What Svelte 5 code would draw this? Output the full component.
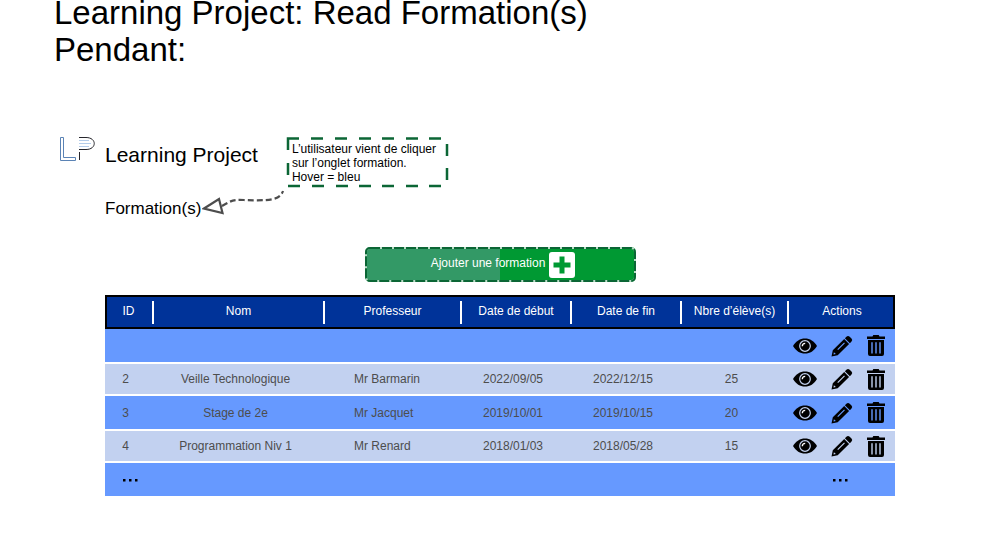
<script>
  const columns = [
    { label: 'ID', width: 49 },
    { label: 'Nom', width: 171 },
    { label: 'Professeur', width: 137 },
    { label: 'Date de début', width: 110 },
    { label: 'Date de fin', width: 110 },
    { label: 'Nbre d’élève(s)', width: 107 },
    { label: 'Actions', width: 106 },
  ];
  const total = columns.reduce((sum, c) => sum + c.width, 0);

  const rows = [
    ['', '', '', '', '', ''],
    ['2', 'Veille Technologique', 'Mr Barmarin', '2022/09/05', '2022/12/15', '25'],
    ['3', 'Stage de 2e', 'Mr Jacquet', '2019/10/01', '2019/10/15', '20'],
    ['4', 'Programmation Niv 1', 'Mr Renard', '2018/01/03', '2018/05/28', '15'],
  ];
</script>

<main>
  <h1>Learning Project: Read Formation(s)<br />Pendant:</h1>

  <header>
    <div class="site">
      <div class="brand">
        <svg class="logo" width="38" height="26" viewBox="0 0 38 26" aria-hidden="true">
          <path d="M2.500 0.500H5.500V20.500H17.500V23.500H2.500Z" fill="none" stroke="#5b83b5" />
          <path d="M21 3.500H31M21 6.500H33M21 9.500H31" stroke="#b5cdea" fill="none" />
          <path d="M21 0.500H28C39 0.500 39 12.500 28 12.500H21M21.500 15V23" fill="none" stroke="#26262c" />
        </svg>
        <span>Learning Project</span>
      </div>
      <nav><a href="#formations">Formation(s)</a></nav>
    </div>

    <div class="note">
      <svg class="frame" aria-hidden="true">
        <path d="M1 13V1.500H12M24 1.500h12m12 0h12m12 0h12m11 0h12m12 0h12m11 0h12M160 7v12m0 12v12M1 26v12M1 49h12m12 0h12m12 0h12m11 0h12m11 0h12m12 0h12m11 0h12" />
      </svg>
      <p>L’utilisateur vient de cliquer<br />sur l’onglet formation.<br />Hover = bleu</p>
    </div>

    <svg class="arrow" width="84" height="28" viewBox="0 0 84 28" aria-hidden="true">
      <path d="M20 17C30 11 32 10.500 42 11C68 12 78 11 81 2" fill="none" stroke="#4d4d4d" stroke-width="2.200" stroke-dasharray="6 3" />
      <path d="M2 19.500L17 10L20.500 24Z" fill="#fff" stroke="#4d4d4d" stroke-width="2.200" />
    </svg>
  </header>

  <button type="button" class="add">
    <svg class="frame" aria-hidden="true">
      <rect class="gaps" x="1" y="1" rx="4" />
      <rect class="dashes" x="1" y="1" rx="4" />
    </svg>
    <span>Ajouter une formation</span>
    <svg width="26" height="26" viewBox="0 0 26 26" aria-hidden="true">
      <rect width="26" height="26" rx="3" fill="#fff" />
      <path d="M13 4.500V21.500M4.500 13H21.500" stroke="#009933" stroke-width="5" />
    </svg>
  </button>

  <table id="formations">
    <colgroup>
      {#each columns as c}<col style="width: {(c.width / total) * 100}%" />{/each}
    </colgroup>
    <thead>
      <tr>{#each columns as c}<th scope="col">{c.label}</th>{/each}</tr>
    </thead>
    <tbody>
      {#each rows as row}
        <tr>
          {#each row as cell, i}<td class:name={i === 2}>{cell}</td>{/each}
          <td class="actions">
            <div>
              <button type="button" aria-label="Voir">
                <svg width="24" height="16" viewBox="0 0 24 16">
                  <path d="M0 8C3 3 7 0.500 12 0.500S21 3 24 8C21 13 17 15.500 12 15.500S3 13 0 8Z" />
                  <circle cx="12" cy="8" r="5.300" fill="none" stroke="#c2d1f0" stroke-width="1.200" />
                  <path d="M9.300 8.200C9.300 6.500 10.500 5.300 12.200 5.300" fill="none" stroke="#fff" stroke-width="1.300" />
                </svg>
              </button>
              <button type="button" aria-label="Modifier">
                <svg width="22" height="22" viewBox="0 0 22 22">
                  <path d="M15.400 1.700Q17 0.100 18.700 1.700L20.500 3.500Q22 5 20.500 6.600L18.900 8.200L13.900 3.200Z" />
                  <path fill-rule="evenodd" d="M13.200 4L18.100 8.900L6.700 20.200L0.500 21.600L1.800 15.200ZM2.900 17.300L2.500 19.600L4.900 19.100ZM6.300 14.300L7.100 15.100L13.900 8.300L13.100 7.500Z" />
                </svg>
              </button>
              <button type="button" aria-label="Supprimer">
                <svg width="18" height="21" viewBox="0 0 18 21">
                  <path d="M0 4V1.500H5.500L6.300 0H11.700L12.500 1.500H18V4Z" />
                  <path fill-rule="evenodd" d="M1 5H17V19Q17 21 15 21H3Q1 21 1 19ZM4.300 7.200V18.500H5.700V7.200ZM8.300 7.200V18.500H9.700V7.200ZM12.300 7.200V18.500H13.700V7.200Z" />
                </svg>
              </button>
            </div>
          </td>
        </tr>
      {/each}
      <tr class="more">
        <td>
          <svg width="16" height="3" viewBox="0 0 16 3" role="img" aria-label="Suite"><path d="M1 0h2.500v2.500H1zM7 0h2.500v2.500H7zM13 0h2.500v2.500H13z" /></svg>
        </td>
        <td colspan="5"></td>
        <td>
          <svg width="16" height="3" viewBox="0 0 16 3" role="img" aria-label="Suite"><path d="M1 0h2.500v2.500H1zM7 0h2.500v2.500H7zM13 0h2.500v2.500H13z" /></svg>
        </td>
      </tr>
    </tbody>
  </table>
</main>

<style>
  :global(body) {
    margin: 0;
    background: #fff;
    color: #000;
    font-family: "Liberation Sans", Arial, sans-serif;
    font-size: 12px;
    line-height: 14px;
  }
  main {
    box-sizing: border-box;
    margin-top: -6px;
    padding: 0 105px 44px;
  }
  h1 {
    margin: 0 0 69px -51px;
    font-size: 33px;
    line-height: 37px;
    font-weight: 400;
  }
  header {
    position: relative;
    display: flex;
    align-items: flex-start;
    gap: 29px;
  }
  .site {
    margin-left: -47px;
    font-size: 21px;
    line-height: 36px;
  }
  .brand {
    display: flex;
    gap: 9px;
  }
  nav {
    margin: 20px 0 0 47px;
    font-size: 17px;
    line-height: 32px;
  }
  a {
    color: inherit;
    text-decoration: none;
  }
  .note {
    position: relative;
    box-sizing: border-box;
    width: 161px;
    height: 50px;
    padding: 5px 0 3px 5px;
    white-space: nowrap;
  }
  .note p {
    margin: 0;
  }
  .frame {
    position: absolute;
    inset: 0;
    width: 100%;
    height: 100%;
    fill: none;
    stroke: #0b6635;
    stroke-width: 2;
    overflow: visible;
  }
  .note .frame {
    stroke-width: 2.5;
  }
  .arrow {
    position: absolute;
    left: 97px;
    top: 52px;
  }
  button {
    padding: 0;
    border: 0;
    background: none;
    font: inherit;
  }
  .add {
    position: relative;
    display: flex;
    align-items: center;
    justify-content: center;
    gap: 4px;
    width: 271px;
    height: 35px;
    margin: 22px auto 13px;
    padding-left: 6px;
    border-radius: 5px;
    background: linear-gradient(90deg, #339966 50%, #009933 50%);
    color: #fff;
  }
  .add span {
    padding-bottom: 3px;
  }
  .gaps,
  .dashes {
    width: calc(100% - 2px);
    height: calc(100% - 2px);
  }
  .gaps {
    stroke: #b9dcc6;
  }
  .dashes {
    stroke-dasharray: 10 2;
  }
  table {
    width: 100%;
    table-layout: fixed;
    border-collapse: collapse;
  }
  thead tr {
    height: 34px;
    background: #003399;
    outline: 2px solid #000;
    outline-offset: -2px;
  }
  th {
    padding: 0 2px 2px 0;
    font-weight: 400;
    color: #fff;
    background: linear-gradient(#fff, #fff) right center / 2px 23px no-repeat;
  }
  th:last-child {
    padding-right: 0;
    background: none;
  }
  tbody tr {
    height: 35px;
    background: #6699ff;
    border-bottom: 2px solid #fff;
  }
  tbody tr:first-child {
    height: 34px;
  }
  tbody tr:nth-child(even) {
    height: 32px;
    background: #c2d1f0;
  }
  tbody tr.more {
    height: 34px;
    border-bottom: 0;
  }
  td {
    padding: 0 8px 0 0;
    text-align: center;
    color: #4d4d4d;
  }
  .name {
    padding: 0 0 0 29px;
    text-align: left;
  }
  .actions {
    padding: 0 10px 0 0;
  }
  .actions div {
    display: flex;
    align-items: center;
    justify-content: flex-end;
    gap: 14px;
  }
  .actions button {
    display: flex;
  }
  .more td {
    padding: 0 4px 3px 0;
  }
  .more td:first-child {
    padding-right: 0;
  }
</style>
